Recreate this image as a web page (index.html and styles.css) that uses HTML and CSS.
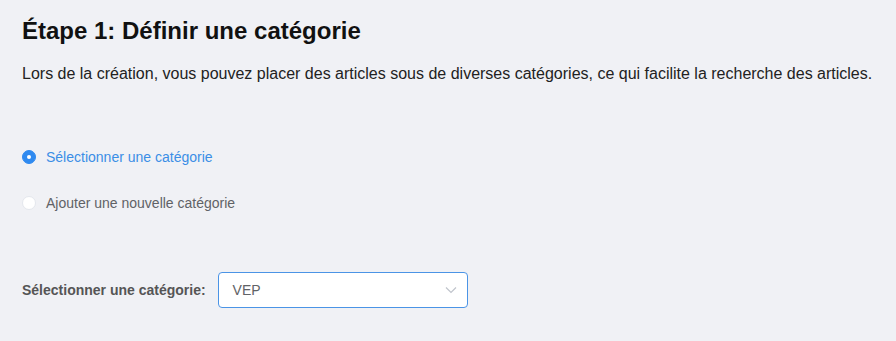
FILE: index.html
```html
<!DOCTYPE html>
<html>
<head>
  <title>Étape 1</title>
  <meta charset="UTF-8">
  <link rel="stylesheet" href="styles.css">
</head>
<body>
  <div class="step">
    <h1>Étape 1: Définir une catégorie</h1>
    <p class="intro">Lors de la création, vous pouvez placer des articles sous de diverses catégories, ce qui facilite la recherche des articles.</p>

    <div class="radio-group">
      <label class="radio checked">
        <span class="radio-dot"></span>
        <span class="radio-label">Sélectionner une catégorie</span>
      </label>
      <label class="radio">
        <span class="radio-dot"></span>
        <span class="radio-label">Ajouter une nouvelle catégorie</span>
      </label>
    </div>

    <div class="form-row">
      <span class="form-label">Sélectionner une catégorie:</span>
      <div class="select">
        <span class="select-value">VEP</span>
        <svg class="select-arrow" width="12" height="8" viewBox="0 0 12 8">
          <path d="M1 1.5 L6 6.5 L11 1.5" fill="none" stroke="#c0c4cc" stroke-width="1.2"/>
        </svg>
      </div>
    </div>
  </div>
</body>
</html>
```

FILE: styles.css
```css
body {
  margin: 0;
  background-color: #f0f1f5;
  font-family: "Liberation Sans", Arial, sans-serif;
  color: #222;
}

.step {
  padding: 17px 22px;
}

h1 {
  margin: 0;
  font-size: 24px;
  font-weight: 700;
  color: #111;
  line-height: 28px;
}

.intro {
  margin: 19px 0 0;
  font-size: 16px;
  line-height: 20px;
  color: #222;
}

.radio-group {
  margin-top: 65px;
  display: flex;
  flex-direction: column;
  gap: 30px;
}

.radio {
  display: flex;
  align-items: center;
  font-size: 14px;
  line-height: 16px;
  color: #606266;
  cursor: pointer;
}

.radio-dot {
  width: 12px;
  height: 12px;
  border: 1px solid #e4e7ed;
  border-radius: 50%;
  background-color: #fff;
  margin-right: 10px;
  position: relative;
}

.radio.checked {
  color: #3a8ee6;
}

.radio.checked .radio-dot {
  background-color: #2f8af0;
  border-color: #2f8af0;
}

.radio.checked .radio-dot:after {
  content: "";
  position: absolute;
  width: 4px;
  height: 4px;
  border-radius: 50%;
  background-color: #fff;
  left: 4px;
  top: 4px;
}

.form-row {
  margin-top: 61px;
  display: flex;
  align-items: center;
}

.form-label {
  font-size: 14px;
  font-weight: 700;
  color: #555;
  margin-right: 12px;
}

.select {
  width: 224px;
  height: 34px;
  border: 1px solid #4b94e6;
  border-radius: 4px;
  background-color: #fff;
  display: flex;
  align-items: center;
  justify-content: space-between;
  padding: 0 10px 0 14px;
}

.select-value {
  font-size: 14px;
  color: #606266;
}
```
